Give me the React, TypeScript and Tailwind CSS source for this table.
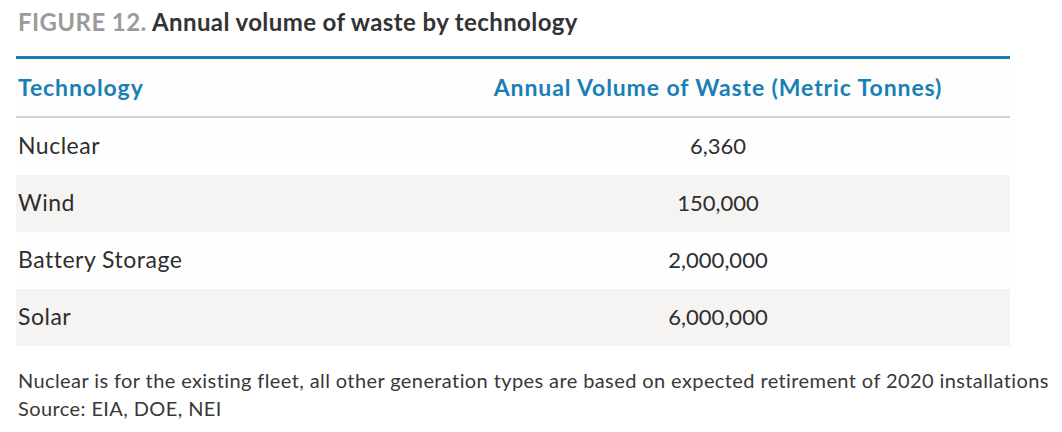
import React from "react";

const rows = [
  { tech: "Nuclear", vol: "6,360", bg: "bg-[#fefefe]" },
  { tech: "Wind", vol: "150,000", bg: "bg-[#f5f4f3]" },
  { tech: "Battery Storage", vol: "2,000,000", bg: "bg-[#fefefe]" },
  { tech: "Solar", vol: "6,000,000", bg: "bg-[#f5f4f3]" },
];

export default function App() {
  return (
    <div
      className="w-[1062px] h-[432px] bg-white overflow-hidden text-[#2e2e2e]"
      style={{ fontFamily: "Lato, 'Open Sans', sans-serif" }}
    >
      <div className="pl-[16px] w-[1010px]">
        <div className="pt-[7px] pl-[2px] h-[56px] text-[24px] leading-[30px] font-bold tracking-[0.4px]">
          <span className="text-[#9b9b9b]">FIGURE 12.</span>{" "}
          <span className="text-[#333333]">Annual volume of waste by technology</span>
        </div>
        <div className="h-[3px] bg-[#1a7db4]" />
        <div className="flex h-[57px] items-center bg-[#fdfdfd] text-[#1a7fb5] font-bold text-[23px] tracking-[0.9px]">
          <div className="w-[410px] pl-[2px]">Technology</div>
          <div className="flex-1 text-center">Annual Volume of Waste (Metric Tonnes)</div>
        </div>
        <div className="h-[2px] bg-[#d4d4d4]" />
        {rows.map((r) => (
          <div key={r.tech} className={`flex h-[57px] items-center ${r.bg}`}>
            <div className="w-[410px] pl-[2px] text-[23px] tracking-[0.5px] pb-[2px]">{r.tech}</div>
            <div className="flex-1 text-center text-[22px] pb-[2px]">{r.vol}</div>
          </div>
        ))}
      </div>
      <div className="pl-[18px] mt-[20px] text-[20px] leading-[28px] text-[#383838] tracking-[0.4px] whitespace-nowrap">
        <div>Nuclear is for the existing fleet, all other generation types are based on expected retirement of 2020 installations</div>
        <div>Source: EIA, DOE, NEI</div>
      </div>
    </div>
  );
}
